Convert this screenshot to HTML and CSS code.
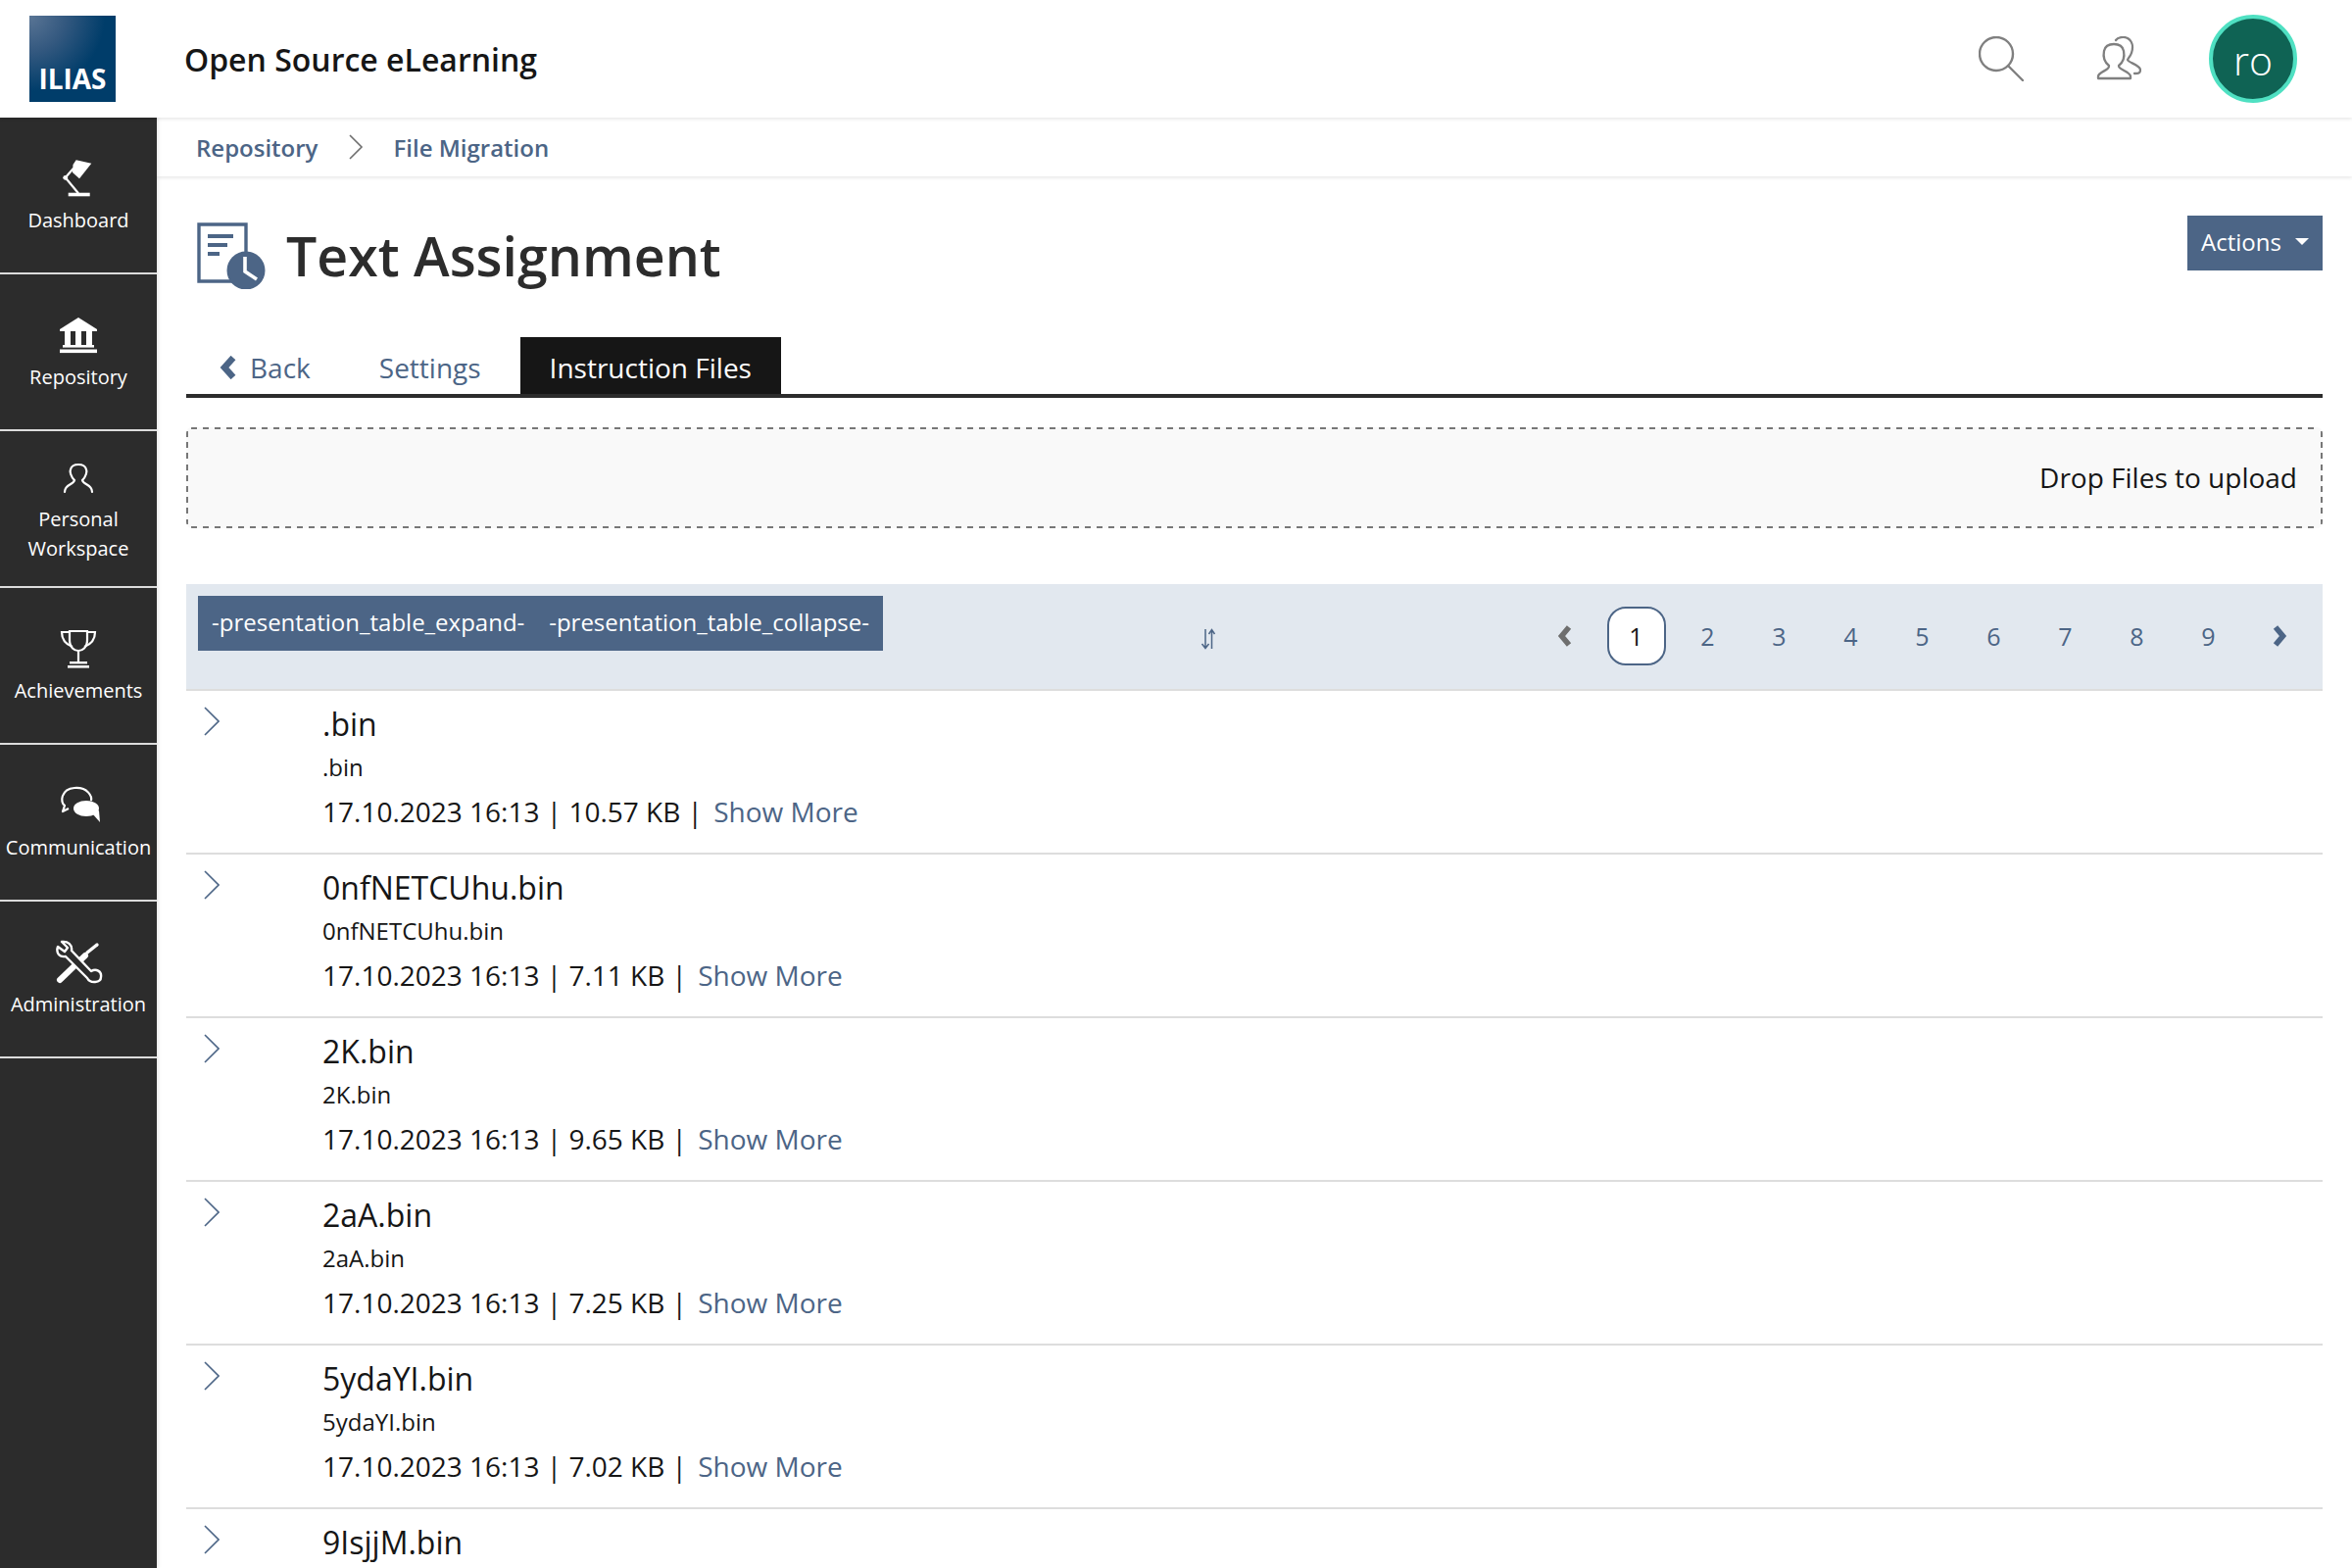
FILE: index.html
```html
<!DOCTYPE html>
<html lang="en">
<head>
<meta charset="utf-8">
<title>Text Assignment</title>
<link rel="stylesheet" href="styles.css">
</head>
<body>
<header class="topbar">
  <div class="logo"><span>ILIAS</span></div>
  <div class="site-title">Open Source eLearning</div>
  <div class="top-tools">
    <svg class="tool-icon" viewBox="0 0 46 46"><circle cx="18" cy="18" r="17" fill="none" stroke="#808080" stroke-width="2.4"/><path d="M30 30 L45 45" stroke="#808080" stroke-width="2.4" stroke-linecap="round"/></svg>
    <svg class="tool-icon users" viewBox="0 0 46 46"><g fill="none" stroke="#808080" stroke-width="2.3" stroke-linejoin="round" stroke-linecap="round"><path d="M2 43 V41 C2 36 14 35 13 30 C8 26 7 20 8 15 C9 10 13 8 18 8 C23 8 27 10 28 15 C29 20 28 26 23 30 C22 34 35 36 35 41 V43 Z"/><path d="M20 4 C22 1 28 0 32 2 C37 5 38 11 36 17 C35 20 33 22 32 24 C33 27 44 29 45 34 C45 38 43 38 39 38"/></g></svg>
    <div class="avatar">ro</div>
  </div>
</header>
<div class="body-row">
  <nav class="sidebar">
    <a class="nav-item"><svg class="nav-icon" viewBox="0 0 60 50"><path d="M27.7 4.3 L43.3 7.7 L31 23.3 L24 17 L24.5 9 Z" fill="#fff"/><path d="M16.7 22.3 L25 12.7 M16.7 22.3 L30 38.3" stroke="#fff" stroke-width="2.2" fill="none"/><circle cx="16.7" cy="22.3" r="2.4" fill="#fff"/><rect x="19.7" y="37.7" width="22" height="3.6" fill="#fff"/></svg><span>Dashboard</span></a>
    <a class="nav-item"><svg class="nav-icon" viewBox="0 0 60 50"><path d="M30 5 L49 17 V19 H11 V17 Z" fill="#fff"/><path d="M16 19 h6 v15 h-6z M27 19 h6 v15 h-6z M38 19 h6 v15 h-6z" fill="#fff"/><rect x="14" y="33" width="32" height="2.6" fill="#fff"/><rect x="11" y="37.5" width="38" height="3.6" fill="#fff"/></svg><span>Repository</span></a>
    <a class="nav-item"><svg class="nav-icon" viewBox="0 0 60 50"><path d="M16 38 C16 30 25 31 26 26 C22 22 21 17 22 15 C23 11 26 10 30 10 C34 10 37 11 38 15 C39 17 38 22 34 26 C35 31 44 30 44 38" fill="none" stroke="#fff" stroke-width="2.2" stroke-linecap="round"/></svg><span>Personal<br>Workspace</span></a>
    <a class="nav-item"><svg class="nav-icon" viewBox="0 0 60 50"><g fill="none" stroke="#fff" stroke-width="2.2"><path d="M21 5 H39 V14 C39 22 34 25 30 25 C26 25 21 22 21 14 Z"/><path d="M21 6 H13 C13 13 16 18 24 21 M39 6 H47 C47 13 44 18 36 21"/><path d="M30 25 V38"/></g><rect x="21" y="36" width="18" height="2.4" fill="#fff"/><rect x="19" y="40" width="22" height="2.6" fill="#fff"/></svg><span>Achievements</span></a>
    <a class="nav-item"><svg class="nav-icon" viewBox="0 0 60 50"><path d="M20 26 L14 29 L16 23 C11 20 12 6 26 5 C40 4 44 14 43 18" fill="none" stroke="#fff" stroke-width="2.2" stroke-linejoin="round"/><ellipse cx="38" cy="26" rx="13" ry="8" fill="#fff"/><path d="M44 31 L52 40 L51 28 Z" fill="#fff"/></svg><span>Communication</span></a>
    <a class="nav-item"><svg class="nav-icon tools" viewBox="0 0 60 50"><path d="M11 41 L37 16" stroke="#fff" stroke-width="6" stroke-linecap="round"/><path d="M39 13 L49 5" stroke="#fff" stroke-width="3.4" stroke-linecap="round"/><path d="M13 2 L19 8 L16 12 L9 7 C7 13 10 18 17 17 L39 39 C42 45 53 44 53 38 C54 32 48 29 43 32 L23 11 C24 5 19 1 13 2 Z" fill="#2c2c2c" stroke="#fff" stroke-width="2.4" stroke-linejoin="round"/></svg><span>Administration</span></a>
  </nav>
  <main class="main">
    <div class="crumbs">
      <a class="link crumb">Repository</a>
      <svg class="crumb-sep" viewBox="0 0 16 28"><path d="M2 2 L14 14 L2 26" fill="none" stroke="#6e6e6e" stroke-width="1.6"/></svg>
      <a class="link crumb">File Migration</a>
    </div>
    <div class="content">
      <div class="head-row">
        <div class="head-left">
          <svg class="title-icon" viewBox="0 0 70 68"><path d="M36 60 H2 V2 H50 V30" fill="none" stroke="#4c6586" stroke-width="3.4"/><path d="M11 12 H37 V16 H11Z M11 21 H31 V25 H11Z M11 30 H23 V34 H11Z" fill="#4c6586"/><circle cx="50" cy="49" r="19.5" fill="#4c6586"/><path d="M49 35 V50 L61 58" fill="none" stroke="#fff" stroke-width="3.6"/></svg>
          <h1 class="title">Text Assignment</h1>
        </div>
        <button class="btn actions">Actions<i class="caret"></i></button>
      </div>
      <div class="tabs">
        <a class="tab back"><svg class="back-icon" viewBox="0 0 18 24"><path d="M15 2 L6 12 L15 22" fill="none" stroke="#4c6586" stroke-width="6.5"/></svg>Back</a>
        <a class="tab">Settings</a>
        <a class="tab active">Instruction Files</a>
      </div>
      <div class="dropzone">Drop Files to upload</div>
      <div class="table-head">
        <div class="expand-btn"><span>-presentation_table_expand-</span><span>-presentation_table_collapse-</span></div>
        <svg class="sort-icon" viewBox="0 0 16 22"><path d="M5 1 V20 M1.5 16 L5 20.5 L8.5 16 M11.5 21 V2 M8.5 6 L11.5 1.5 L14.5 6" fill="none" stroke="#4c6586" stroke-width="1.5"/></svg>
        <div class="pager">
          <svg class="pg-chev" viewBox="0 0 15 22"><path d="M12 2 L4.5 11 L12 20" fill="none" stroke="#6e6e6e" stroke-width="5.6"/></svg>
          <span class="pg current">1</span><span class="pg">2</span><span class="pg">3</span><span class="pg">4</span><span class="pg">5</span><span class="pg">6</span><span class="pg">7</span><span class="pg">8</span><span class="pg">9</span>
          <svg class="pg-chev" viewBox="0 0 15 22"><path d="M3 2 L10.5 11 L3 20" fill="none" stroke="#4c6586" stroke-width="5.6"/></svg>
        </div>
      </div>
      <div class="row"><svg class="row-chev" viewBox="0 0 16 30"><path d="M1 1 L15 15 L1 29" fill="none" stroke="#4c6586" stroke-width="1.6"/></svg><div class="row-body"><div class="row-title">.bin</div><div class="row-sub">.bin</div><div class="row-meta">17.10.2023 16:13 | 10.57 KB | <a class="link">Show More</a></div></div></div>
      <div class="row"><svg class="row-chev" viewBox="0 0 16 30"><path d="M1 1 L15 15 L1 29" fill="none" stroke="#4c6586" stroke-width="1.6"/></svg><div class="row-body"><div class="row-title">0nfNETCUhu.bin</div><div class="row-sub">0nfNETCUhu.bin</div><div class="row-meta">17.10.2023 16:13 | 7.11 KB | <a class="link">Show More</a></div></div></div>
      <div class="row"><svg class="row-chev" viewBox="0 0 16 30"><path d="M1 1 L15 15 L1 29" fill="none" stroke="#4c6586" stroke-width="1.6"/></svg><div class="row-body"><div class="row-title">2K.bin</div><div class="row-sub">2K.bin</div><div class="row-meta">17.10.2023 16:13 | 9.65 KB | <a class="link">Show More</a></div></div></div>
      <div class="row"><svg class="row-chev" viewBox="0 0 16 30"><path d="M1 1 L15 15 L1 29" fill="none" stroke="#4c6586" stroke-width="1.6"/></svg><div class="row-body"><div class="row-title">2aA.bin</div><div class="row-sub">2aA.bin</div><div class="row-meta">17.10.2023 16:13 | 7.25 KB | <a class="link">Show More</a></div></div></div>
      <div class="row"><svg class="row-chev" viewBox="0 0 16 30"><path d="M1 1 L15 15 L1 29" fill="none" stroke="#4c6586" stroke-width="1.6"/></svg><div class="row-body"><div class="row-title">5ydaYI.bin</div><div class="row-sub">5ydaYI.bin</div><div class="row-meta">17.10.2023 16:13 | 7.02 KB | <a class="link">Show More</a></div></div></div>
      <div class="row last"><svg class="row-chev" viewBox="0 0 16 30"><path d="M1 1 L15 15 L1 29" fill="none" stroke="#4c6586" stroke-width="1.6"/></svg><div class="row-body"><div class="row-title">9IsjjM.bin</div></div></div>
    </div>
  </main>
</div>
</body>
</html>
```
FILE: styles.css
```css
* { box-sizing: border-box; }
html, body { margin: 0; height: 100%; overflow: hidden; background: #fff; }
body { font-family: "Open Sans", "DejaVu Sans", sans-serif; color: #161616; display: flex; flex-direction: column; }
.link { color: #4c6586; text-decoration: none; }

.topbar { height: 120px; flex: none; display: flex; align-items: center; padding: 0 56px 0 30px; position: relative; z-index: 2; box-shadow: 0 1px 4px rgba(0,0,0,.12); background: #fff; }
.logo { width: 88px; height: 88px; background: radial-gradient(circle at 0 0, #5a7595 0, #33587f 30%, #003d6a 62%, #003d6a 100%); display: flex; align-items: flex-end; justify-content: center; color: #fff; font-size: 28px; font-weight: 700; line-height: 1; padding-bottom: 10px; }
.site-title { margin-left: 70px; font-size: 32px; font-weight: 600; color: #161616; }
.top-tools { margin-left: auto; display: flex; align-items: center; }
.tool-icon { width: 46px; height: 46px; }
.users { margin-left: 74px; }
.avatar { width: 90px; height: 90px; margin-left: 69px; border-radius: 50%; background: #0f6354; border: 4px solid #4fe0c2; color: #fff; font-size: 41px; font-weight: 300; padding-top: 2px; display: flex; align-items: center; justify-content: center; }

.body-row { flex: 1; display: flex; min-height: 0; }
.sidebar { width: 160px; flex: none; background: #2c2c2c; display: flex; flex-direction: column; box-shadow: 1px 0 4px rgba(0,0,0,.12); z-index: 1; }
.nav-item { height: 160px; flex: none; border-bottom: 2px solid #dcdcdc; padding-top: 1px; display: flex; flex-direction: column; align-items: center; justify-content: center; color: #fff; font-size: 20px; line-height: 30px; text-align: center; }
.nav-item span { white-space: nowrap; margin-top: 1px; }
.nav-icon { width: 60px; height: 50px; flex: none; }

.main { flex: 1; min-width: 0; }
.crumbs { height: 60px; display: flex; align-items: center; padding-left: 40px; box-shadow: 0 1px 4px rgba(0,0,0,.12); }
.crumb { font-size: 24px; font-weight: 600; }
.crumb-sep { width: 16px; height: 28px; margin: 0 30px 0 31px; }
.content { padding: 0 30px; }

.head-row { display: flex; justify-content: space-between; align-items: flex-start; height: 164px; }
.head-left { display: flex; align-items: center; padding: 47px 0 0 11px; }
.title-icon { width: 70px; height: 68px; flex: none; }
.title { margin: 0 0 0 21px; font-size: 55.4px; line-height: 68px; font-weight: 600; color: #2c2c2c; }
.btn { border: 0; background: #4c6586; color: #fff; font-family: inherit; }
.actions { margin-top: 40px; width: 138px; height: 56px; font-size: 24px; display: flex; align-items: center; padding: 0 0 3px 14px; }
.caret { display: block; margin-left: 14px; border-style: solid; border-width: 7px 7.5px 0; border-color: #fff transparent transparent; }

.tabs { height: 62px; display: flex; align-items: stretch; gap: 10px; border-bottom: 4px solid #2c2c2c; }
.tab { display: flex; align-items: center; font-size: 28px; padding: 3px 30px 0; color: #4c6586; }
.back { padding-left: 33px; }
.back-icon { width: 18px; height: 24px; margin-right: 14px; }
.tab.active { background: #161616; color: #fff; }

.dropzone {
  margin-top: 30px; height: 103px; border-radius: 6px;
  background-color: #f9f9f9;
  background-image:
    repeating-linear-gradient(90deg, #777 0 6px, transparent 6px 12px),
    repeating-linear-gradient(90deg, #777 0 6px, transparent 6px 12px),
    repeating-linear-gradient(180deg, #777 0 6px, transparent 6px 11.2px),
    repeating-linear-gradient(180deg, #777 0 6px, transparent 6px 11.2px);
  background-size: calc(100% - 10px) 2px, calc(100% - 10px) 2px, 2px calc(100% - 8px), 2px calc(100% - 8px);
  background-position: 5px 0, 5px 100%, 0 4px, 100% 4px;
  background-repeat: no-repeat;
  display: flex; align-items: center; justify-content: flex-end; padding: 0 26px 2px 0; font-size: 28px; color: #161616;
}

.table-head { margin-top: 57px; height: 109px; background: #e2e8ef; border-bottom: 2px solid #dddddd; display: flex; align-items: flex-start; padding: 12px 0 0 12px; }
.expand-btn { width: 699px; height: 56px; flex: none; background: #4c6586; color: #fff; font-size: 24px; white-space: nowrap; display: flex; align-items: center; justify-content: space-between; padding: 0 14px 3px 14px; }
.sort-icon { width: 16px; height: 22px; margin: 33px 0 0 324px; flex: none; }
.pager { margin-left: auto; display: flex; align-items: center; height: 60px; margin-top: 11px; padding-right: 7px; }
.pg-chev { width: 15px; height: 22px; flex: none; margin: 0 29px; }
.pg { width: 73px; text-align: center; font-size: 25px; color: #4c6586; }
.pg.current { width: 60px; height: 60px; margin: 0 6.5px; line-height: 56px; background: #fff; border: 2px solid #4c6586; border-radius: 19px; color: #161616; }

.row { height: 167px; border-bottom: 2px solid #dddddd; display: flex; padding: 12px 0 0 18px; }
.row.last { height: auto; border-bottom: 0; }
.row-chev { width: 16px; height: 30px; flex: none; margin-top: 4px; }
.row-body { margin-left: 105px; }
.row-title { font-size: 32px; line-height: 44px; color: #161616; }
.row-sub { font-size: 24px; line-height: 44px; }
.row-meta { font-size: 28px; line-height: 46px; }
.row-meta .link { margin-left: 4px; }
```
